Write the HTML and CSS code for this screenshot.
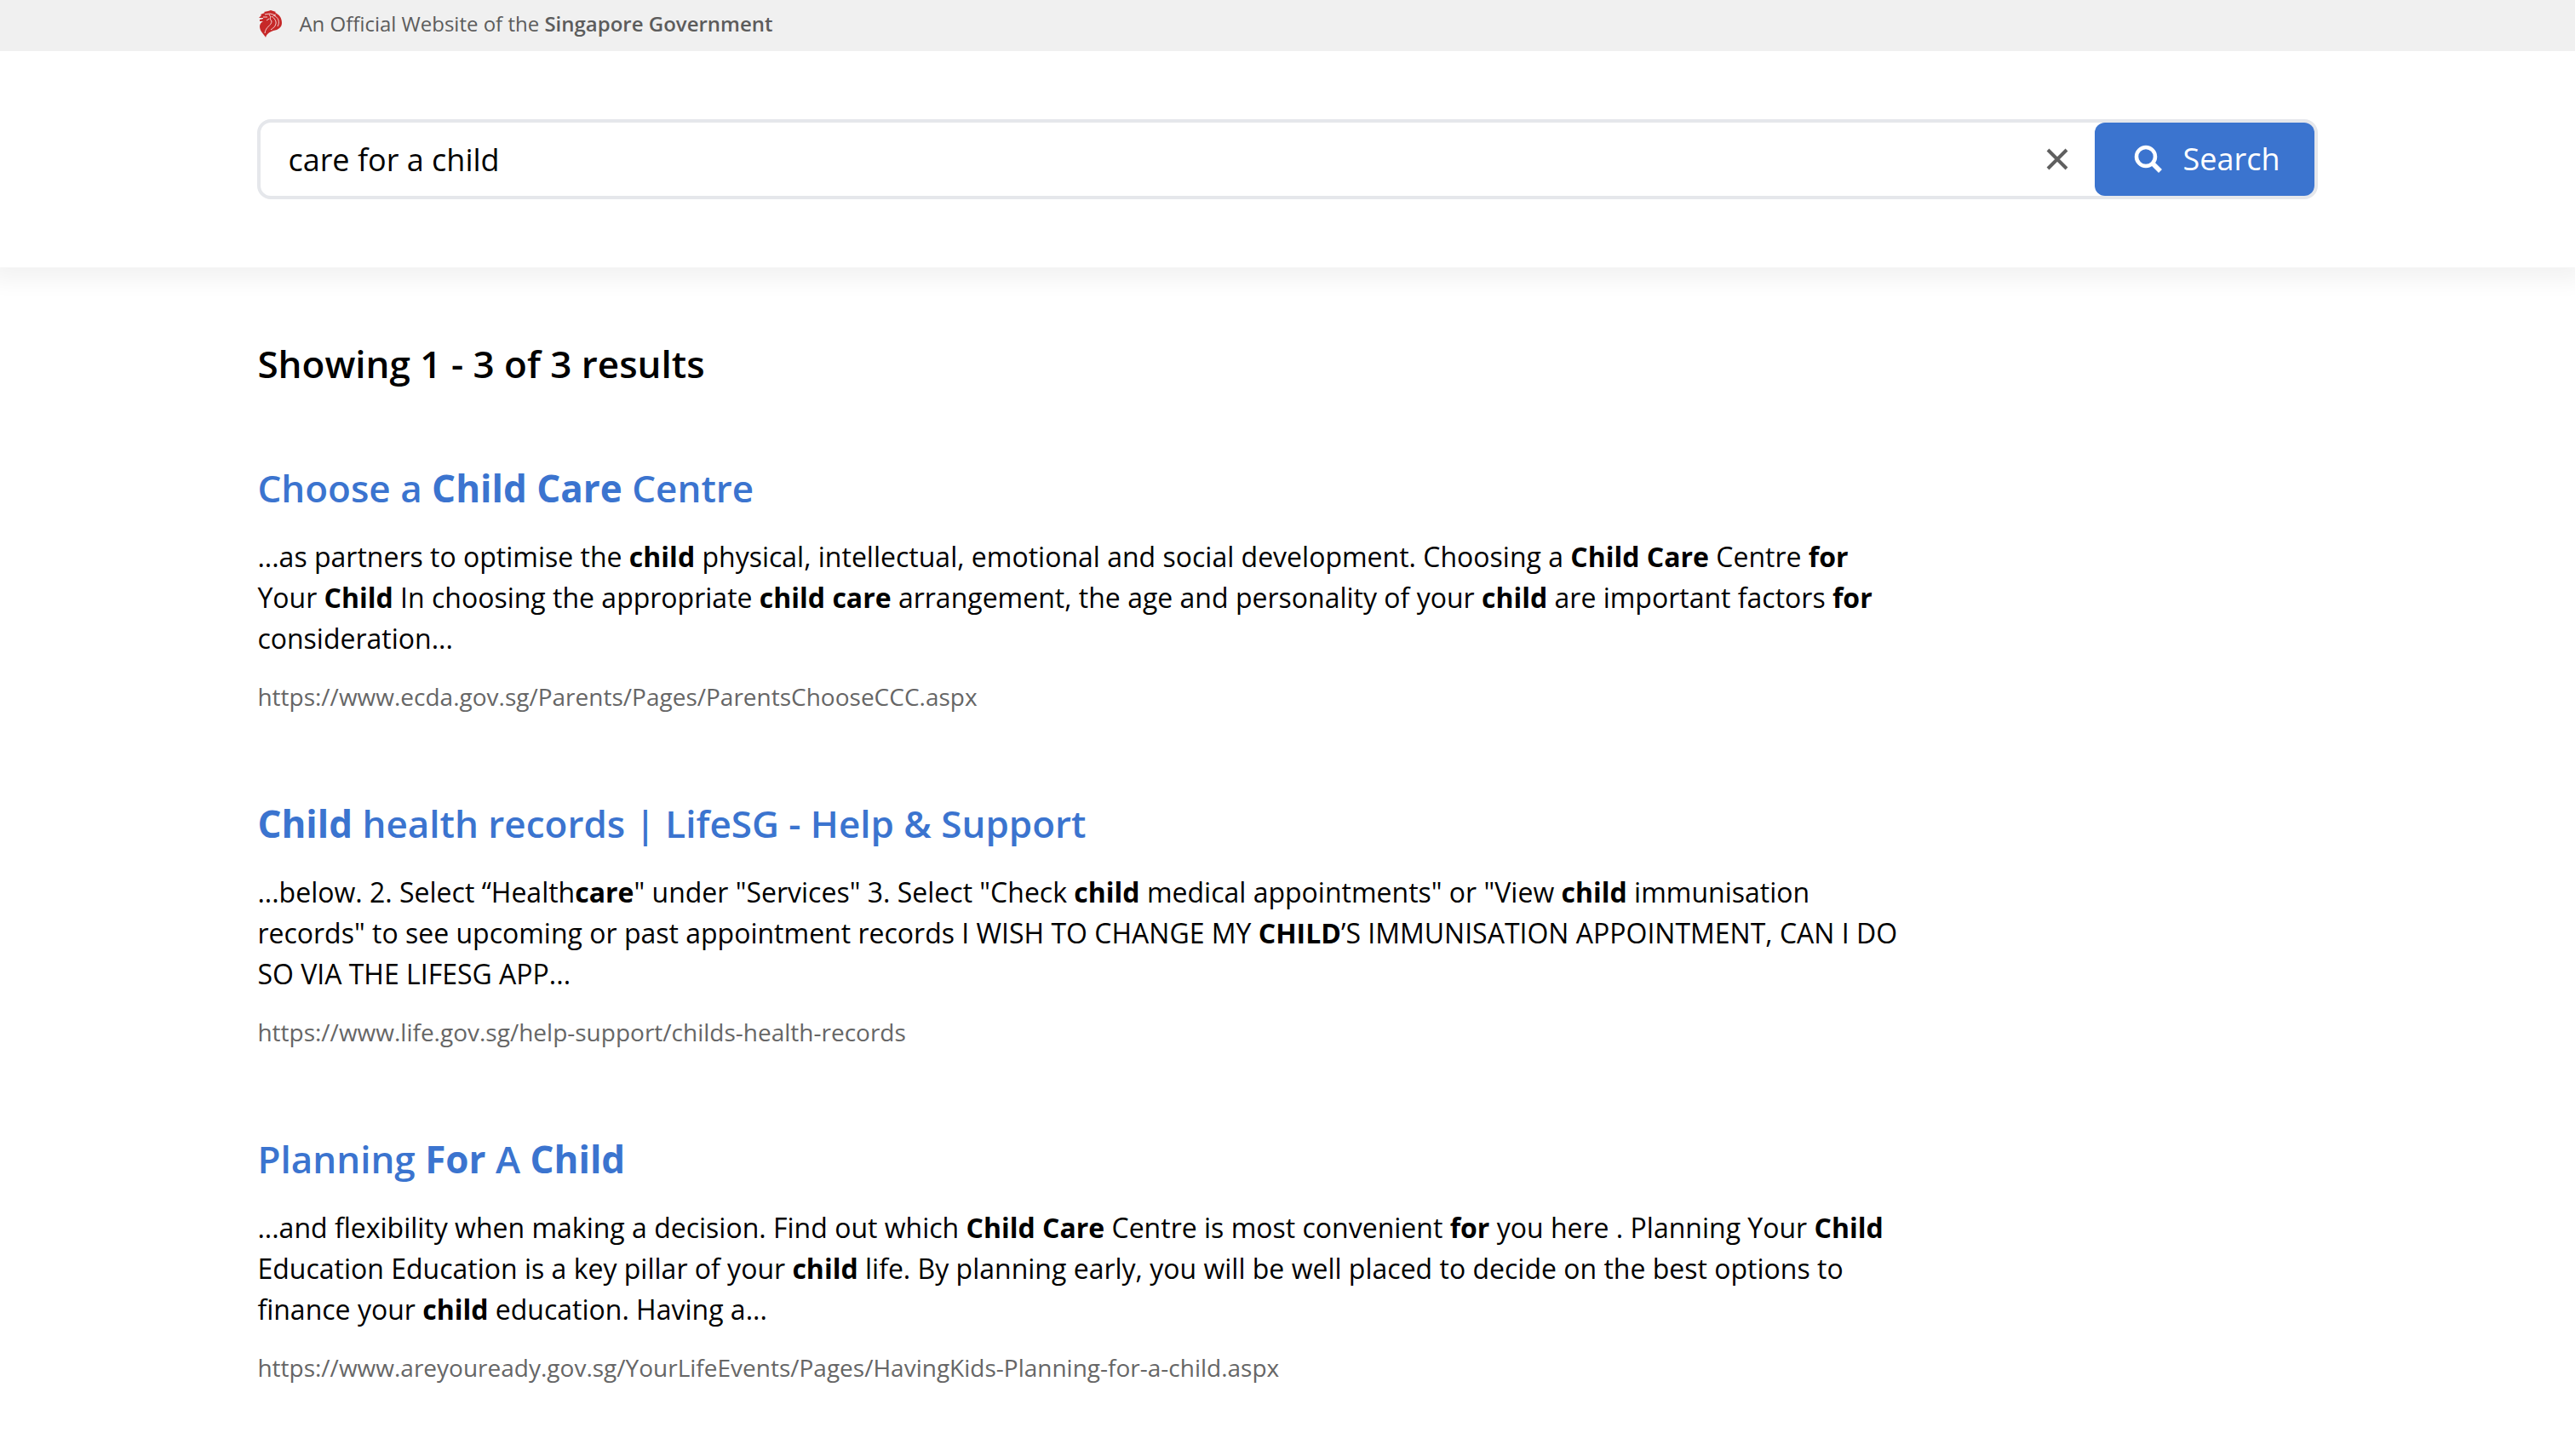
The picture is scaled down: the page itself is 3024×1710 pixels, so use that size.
FILE: index.html
```html
<!DOCTYPE html>
<html lang="en">
<head>
<meta charset="utf-8">
<meta name="viewport" content="width=device-width, initial-scale=1">
<title>Search results</title>
<link rel="stylesheet" href="styles.css">
</head>
<body>
<div class="masthead">
  <svg class="masthead-icon" viewBox="0 0 27 32" aria-hidden="true">
    <path fill="#c62828" d="M0 9 3 6 2 5 7 3 6 2 11 1 14 0 20 2 19 3C24 5 27 9 27 15 27 20 23 23 17 24 12 26 9 28 8 32 6 28 1 25 1 19 1 16 3 14 5 13H1V11L5 10 5 9Z"/>
    <path fill="none" stroke="#f3d3d3" stroke-width="1" d="M7 5 13 4 20 6M12 5 14 8 13 10 15 13C15 18 8 19 7 27M15 7C22 12 22 18 14 23M17 6C23 8 25 14 22 19M5 8 10 8M9 12 12 10"/>
  </svg>
  <span>An Official Website of the <b class="semi">Singapore Government</b></span>
</div>
<header class="header">
  <form class="search" role="search">
    <input class="search-input" type="text" aria-label="Search" value="care for a child">
    <button class="clear" type="reset" aria-label="Clear search">
      <svg width="26" height="26" viewBox="0 0 26 26" aria-hidden="true"><path d="M2 2 24 24M24 2 2 24" stroke="#5f5f5f" stroke-width="4" fill="none"/></svg>
    </button>
    <button class="submit" type="submit">
      <svg width="34" height="34" viewBox="0 0 34 34" fill="none" stroke="#fff" aria-hidden="true"><circle cx="14" cy="14" r="11" stroke-width="4.500"/><path d="m21 21 10 10" stroke-width="5.500"/></svg>
      <span>Search</span>
    </button>
  </form>
</header>
<main class="results">
  <h1 class="summary">Showing 1 - 3 of 3 results</h1>
  <article class="result">
    <h2 class="title"><a href="#ecda">Choose a <b>Child</b> <b>Care</b> Centre</a></h2>
    <p class="snippet">...as partners to optimise the <b>child</b> physical, intellectual, emotional and social development. Choosing a <b>Child</b> <b>Care</b> Centre <b>for</b> Your <b>Child</b> In choosing the appropriate <b>child</b> <b>care</b> arrangement, the age and personality of your <b>child</b> are important factors <b>for</b> consideration...</p>
    <p class="url">https://www.ecda.gov.sg/Parents/Pages/ParentsChooseCCC.aspx</p>
  </article>
  <article class="result">
    <h2 class="title"><a href="#life"><b>Child</b> health records | LifeSG - Help &amp; Support</a></h2>
    <p class="snippet">...below. 2. Select “Health<b>care</b>" under "Services" 3. Select "Check <b>child</b> medical appointments" or "View <b>child</b> immunisation records" to see upcoming or past appointment records I WISH TO CHANGE MY <b>CHILD</b>’S IMMUNISATION APPOINTMENT, CAN I DO SO VIA THE LIFESG APP...</p>
    <p class="url">https://www.life.gov.sg/help-support/childs-health-records</p>
  </article>
  <article class="result">
    <h2 class="title"><a href="#areyouready">Planning <b>For</b> A <b>Child</b></a></h2>
    <p class="snippet">...and flexibility when making a decision. Find out which <b>Child</b> <b>Care</b> Centre is most convenient <b>for</b> you here . Planning Your <b>Child</b> Education Education is a key pillar of your <b>child</b> life. By planning early, you will be well placed to decide on the best options to finance your <b>child</b> education. Having a...</p>
    <p class="url">https://www.areyouready.gov.sg/YourLifeEvents/Pages/HavingKids-Planning-for-a-child.aspx</p>
  </article>
</main>
</body>
</html>
```
FILE: styles.css
```css
* {
  box-sizing: border-box;
}

body {
  margin: 0;
  background: #fff;
  color: #000;
  font-family: "Open Sans", "Noto Sans", sans-serif;
  font-size: 32px;
  line-height: 48px;
}

h1, h2, p {
  margin: 0;
}

b {
  font-weight: 700;
}

.masthead {
  position: relative;
  z-index: 1;
  display: flex;
  align-items: center;
  gap: 20px;
  padding: 8px 10% 12px;
  background: #f0f0f0;
  color: #5c5c5c;
  font-size: 24px;
  line-height: 40px;
}

.masthead-icon {
  width: 27px;
  height: 32px;
  margin-left: 2px;
}

.masthead .semi {
  font-weight: 600;
}

.header {
  padding: 80px 10%;
  box-shadow: 0 4px 24px 12px rgba(0, 20, 10, 0.05);
}

.search {
  display: flex;
  align-items: stretch;
  border: 4px solid #e5e7eb;
  border-radius: 16px;
}

.search-input {
  flex: 1;
  min-width: 0;
  height: 86px;
  padding: 0 32px;
  border: 0;
  border-radius: 12px;
  outline: 0;
  background: transparent;
  color: #000;
  font: inherit;
  font-size: 36px;
}

.clear,
.submit {
  display: flex;
  align-items: center;
  justify-content: center;
  border: 0;
  font: inherit;
  cursor: pointer;
}

.clear {
  width: 88px;
  padding: 0;
  background: transparent;
}

.submit {
  gap: 24px;
  width: 258px;
  padding: 0 0 0 6px;
  border-radius: 12px;
  background: #3b74cf;
  color: #fff;
  font-size: 36px;
}

.results {
  padding: 80px 10% 96px;
}

.summary {
  margin-bottom: 80px;
  font-size: 44px;
  font-weight: 600;
  line-height: 66px;
}

.result {
  display: grid;
  gap: 24px;
  max-width: 80%;
}

.result + .result {
  margin-top: 96px;
}

.title {
  font-size: 44px;
  font-weight: 600;
  line-height: 66px;
}

.title a {
  color: #3b74cf;
  text-decoration: none;
}

.url {
  color: #666;
  font-size: 28px;
  line-height: 40px;
  overflow-wrap: anywhere;
}
```
